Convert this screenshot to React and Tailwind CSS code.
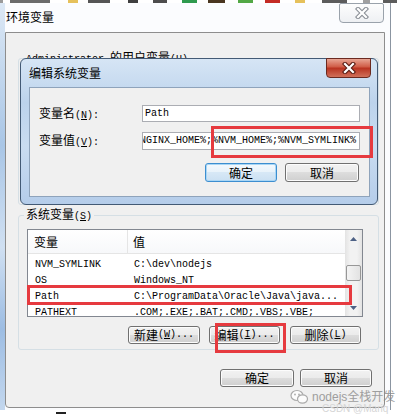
import React from 'react';

const CJK = /([\u3400-\u9fff]+)/;
const mono = "font-['Liberation_Mono',monospace]";
const cjk = "font-['Noto_Sans_CJK_SC',sans-serif]";

// SimSun look: CJK glyphs 12px, latin glyphs half width
const Mixed = ({ text, accel }) => (
  <>
    {text
      .split(CJK)
      .filter(Boolean)
      .map((part, i) => {
        if (CJK.test(part)) {
          return (
            <span key={i} className={`${cjk} text-[12px]`}>
              {part}
            </span>
          );
        }
        if (accel && part.includes(`(${accel})`)) {
          const [before, after] = part.split(`(${accel})`);
          return (
            <span key={i} className={`${mono} text-[10px]`}>
              {before}(<span className="underline">{accel}</span>){after}
            </span>
          );
        }
        return (
          <span key={i} className={`${mono} text-[10px]`}>
            {part}
          </span>
        );
      })}
  </>
);

const Button = ({ children, primary, className = '' }) => (
  <div
    className={`flex items-center justify-center rounded-[3px] border leading-[14px] text-black ${
      primary
        ? 'border-[#3c8ed0] bg-[linear-gradient(#f4f9fd,#e8f2fa_50%,#d7e8f6_50%,#cbe0f2)] shadow-[inset_0_0_0_1px_#a9d6f5]'
        : 'border-[#707070] bg-[linear-gradient(#f2f2f2,#ebebeb_50%,#dddddd_50%,#cfcfcf)] shadow-[inset_0_0_0_1px_#fcfcfc]'
    } ${className}`}
  >
    {children}
  </div>
);

const CloseX = ({ outline, fill }) => (
  <svg width="14" height="12" viewBox="0 0 14 12">
    <path d="M3 2 L11 10 M11 2 L3 10" stroke={outline} strokeWidth="4.4" strokeLinecap="square" />
    <path d="M3 2 L11 10 M11 2 L3 10" stroke={fill} strokeWidth="2.2" strokeLinecap="square" />
  </svg>
);

const stripItems = [
  'ml-0 w-[3px] bg-[#9a9a9a]',
  'ml-[7px] w-[40px] bg-[#6b6b6b]',
  'ml-[18px] w-[10px] bg-[#e6c15b]',
  'ml-[10px] w-[22px] bg-[#555555]',
  'ml-[18px] w-[10px] bg-[#3f3f3f]',
  'ml-[15px] w-[14px] bg-[#4d4d4d]',
  'ml-[15px] w-[15px] bg-[#2f9a4e]',
  'ml-[11px] w-[17px] bg-[#4a3620]',
  'ml-[13px] w-[15px] bg-[#52a845]',
  'ml-[12px] w-[15px] bg-[#c42b25]',
  'ml-[15px] w-[10px] bg-[#e6c15b]',
  'ml-[17px] w-[25px] bg-[#5c5c5c]',
  'ml-[16px] w-[7px] bg-[#a0a0a0]',
  'ml-[13px] w-[14px] bg-[#5c5c5c]',
];

const rows = [
  ['NVM_SYMLINK', 'C:\\dev\\nodejs'],
  ['OS', 'Windows_NT'],
  ['Path', 'C:\\ProgramData\\Oracle\\Java\\java...'],
  ['PATHEXT', '.COM;.EXE;.BAT;.CMD;.VBS;.VBE;'],
];

const Arrow = ({ up }) => (
  <svg width="7" height="4" viewBox="0 0 7 4">
    <path d={up ? 'M0 4 L3.5 0 L7 4 Z' : 'M0 0 L3.5 4 L7 0 Z'} fill="#4d6185" />
  </svg>
);

const App = () => {
  return (
    <div className="relative flex h-[415px] w-[397px] flex-col overflow-hidden bg-white text-black">
      {/* cropped bookmarks bar */}
      <div className="flex h-[3px] shrink-0">
        {stripItems.map((c, i) => (
          <div key={i} className={`h-[3px] shrink-0 ${c}`} />
        ))}
      </div>

      <div className="flex">
        <div className="w-[5px] shrink-0 self-stretch bg-[linear-gradient(180deg,#dce8f5,#a9c6e6_35%,#d0e0f2_60%,#9dbde3_80%,#c3d7ee)]" />

        {/* 环境变量 window */}
        <div className="flex w-[386px] shrink-0 flex-col border-r border-[#8b95a1] bg-[#fbfcfe]">
          <div className="flex h-[29px] items-start justify-between">
            <span className={`${cjk} ml-[1px] mt-[7px] text-[12px] leading-[14px]`}>环境变量</span>
            <div className="mr-[6px] flex h-[20px] w-[45px] items-center justify-center rounded-b-[4px] rounded-t-[2px] border border-[#9aa2ab] bg-[linear-gradient(#fdfdfd,#eef0f3)]">
              <CloseX outline="#8a8f96" fill="#ffffff" />
            </div>
          </div>

          <div className="mr-[5px] flex h-[376px] w-[380px] flex-col rounded-b-[4px] border border-[#8d8d8d] bg-[#f0f0f0] pl-[12px] pr-[5px]">
            {/* user variables (mostly hidden behind the edit dialog) */}
            <fieldset className="mt-[17px] h-[155px] rounded-[3px] border border-[#d5dfe5] p-0">
              <legend className="ml-[5px] px-[2px] leading-[12px]">
                <Mixed text="Administrator 的用户变量(U)" accel="U" />
              </legend>
            </fieldset>

            {/* system variables */}
            <fieldset className="mt-[2px] flex h-[143px] flex-col rounded-[3px] border border-[#d5dfe5] p-0 pl-[8px] pr-[15px]">
              <legend className="ml-[-3px] px-[2px] leading-[12px]">
                <Mixed text="系统变量(S)" accel="S" />
              </legend>

              <div className="mt-[6px] flex h-[88px] w-[336px] border border-[#828790] bg-white">
                <div className="flex flex-1 flex-col overflow-hidden">
                  <div className="flex h-[24px] shrink-0 items-center border-b border-[#e5e5e5] bg-[linear-gradient(#ffffff,#f7f8fa)]">
                    <div className="flex h-full w-[100px] items-center border-r border-[#e5e5e5] pl-[6px] leading-[14px]">
                      <span className={`${cjk} text-[12px]`}>变量</span>
                    </div>
                    <span className={`${cjk} pl-[5px] text-[12px] leading-[14px]`}>值</span>
                  </div>
                  <div className="mt-[3px] flex flex-col">
                    {rows.map(([name, value]) => (
                      <div key={name} className={`${mono} flex h-[16px] shrink-0 items-center text-[10px] leading-[16px]`}>
                        <span className="w-[101px] shrink-0 pl-[7px]">{name}</span>
                        <span className="whitespace-nowrap pl-[5px]">{value}</span>
                      </div>
                    ))}
                  </div>
                </div>

                {/* scrollbar */}
                <div className="flex w-[17px] shrink-0 flex-col bg-[linear-gradient(90deg,#e3e3e3,#f2f2f2_30%,#f2f2f2_70%,#e3e3e3)]">
                  <div className="flex h-[17px] items-center justify-center">
                    <Arrow up />
                  </div>
                  <div className="ml-[1px] mt-[18px] h-[16px] w-[15px] rounded-[2px] border border-[#979797] bg-[linear-gradient(90deg,#f4f4f4,#e2e2e2)]" />
                  <div className="flex-1" />
                  <div className="flex h-[17px] items-center justify-center">
                    <Arrow />
                  </div>
                </div>
              </div>

              <div className="mr-[2px] mt-[9px] flex justify-end">
                <Button className="h-[18px] w-[72px]">
                  <Mixed text="新建(W)..." accel="W" />
                </Button>
                <Button className="ml-[9px] h-[18px] w-[71px]">
                  <Mixed text="编辑(I)..." accel="I" />
                </Button>
                <Button className="ml-[10px] h-[18px] w-[71px]">
                  <Mixed text="删除(L)" accel="L" />
                </Button>
              </div>
            </fieldset>

            <div className="mt-[19px] flex justify-end pr-[7px]">
              <Button className="h-[18px] w-[74px]">
                <span className={`${cjk} text-[12px]`}>确定</span>
              </Button>
              <Button className="ml-[6px] h-[18px] w-[72px]">
                <span className={`${cjk} text-[12px]`}>取消</span>
              </Button>
            </div>
          </div>
          <div className="h-[2px]" />
        </div>
      </div>

      <div className="ml-[56px] mt-[2px] h-[2px] w-[10px] bg-[#222222]" />

      {/* 编辑系统变量 dialog, on top of the window */}
      <div className="absolute left-[20px] top-[58px] flex h-[147px] w-[358px] flex-col rounded-[6px] border border-[#435a75] bg-[linear-gradient(180deg,#d6e5f5,#bcd3ec_30%,#c9dcf1_60%,#b5cdea)]">
        <div className="flex h-[28px] shrink-0 items-start justify-between">
          <span className={`${cjk} ml-[8px] mt-[7px] text-[12px] leading-[14px]`}>编辑系统变量</span>
          <div className="-mt-[1px] mr-[6px] flex h-[20px] w-[45px] items-center justify-center rounded-b-[4px] border border-[#6b2a20] bg-[linear-gradient(#e8a593,#cf5a44_45%,#b8321f_50%,#d0705a)]">
            <CloseX outline="#5a1d14" fill="#ffffff" />
          </div>
        </div>
        <div className="ml-[8px] flex h-[110px] w-[341px] flex-col border border-[#8ea3bb] bg-[#f0f0f0] pl-[9px] pt-[17px]">
          <div className="flex h-[17px] items-center leading-[14px]">
            <div className="w-[103px] shrink-0">
              <Mixed text="变量名(N):" accel="N" />
            </div>
            <div className={`${mono} flex h-[17px] w-[218px] items-center border border-[#abadb3] bg-white pl-[2px] text-[10px]`}>
              Path
            </div>
          </div>
          <div className="mt-[10px] flex h-[18px] items-center leading-[14px]">
            <div className="w-[103px] shrink-0">
              <Mixed text="变量值(V):" accel="V" />
            </div>
            <div className={`${mono} flex h-[18px] w-[218px] items-center overflow-hidden whitespace-nowrap border border-[#abadb3] bg-white text-[10px]`}>
              <span className="-ml-[3px]">NGINX_HOME%;%NVM_HOME%;%NVM_SYMLINK%</span>
            </div>
          </div>
          <div className="mt-[13px] flex">
            <Button primary className="ml-[166px] h-[19px] w-[72px]">
              <span className={`${cjk} text-[12px]`}>确定</span>
            </Button>
            <Button className="ml-[8px] h-[19px] w-[74px]">
              <span className={`${cjk} text-[12px]`}>取消</span>
            </Button>
          </div>
        </div>
      </div>

      {/* red annotation boxes */}
      <div className="absolute left-[211px] top-[126px] h-[32px] w-[162px] border-[3px] border-[#e63a3f]" />
      <div className="absolute left-[27px] top-[285px] h-[20px] w-[325px] border-[3px] border-[#e63a3f]" />
      <div className="absolute left-[215px] top-[323px] h-[30px] w-[71px] border-[3px] border-[#e63a3f]" />

      {/* watermark */}
      <div className="absolute left-[290px] top-[389px] flex items-center gap-[3px] opacity-80">
        <svg width="19" height="16" viewBox="0 0 19 16">
          <ellipse cx="7" cy="6.5" rx="6" ry="5" fill="white" stroke="#9a9a9a" strokeWidth="1.2" />
          <ellipse cx="12.5" cy="10" rx="5" ry="4.2" fill="white" stroke="#9a9a9a" strokeWidth="1.2" />
          <circle cx="5" cy="5.5" r="0.9" fill="#9a9a9a" />
          <circle cx="9" cy="5.5" r="0.9" fill="#9a9a9a" />
        </svg>
        <span className="font-['Liberation_Sans','Noto_Sans_CJK_SC',sans-serif] text-[12px] leading-[14px] text-[#8a8a8a]">
          nodejs全栈开发
        </span>
      </div>
      <span className="absolute left-[322px] top-[403px] font-['Liberation_Sans',sans-serif] text-[10px] leading-[12px] text-[#d6d6d6]">
        CSDN @Mariq
      </span>
    </div>
  );
};

export default App;
